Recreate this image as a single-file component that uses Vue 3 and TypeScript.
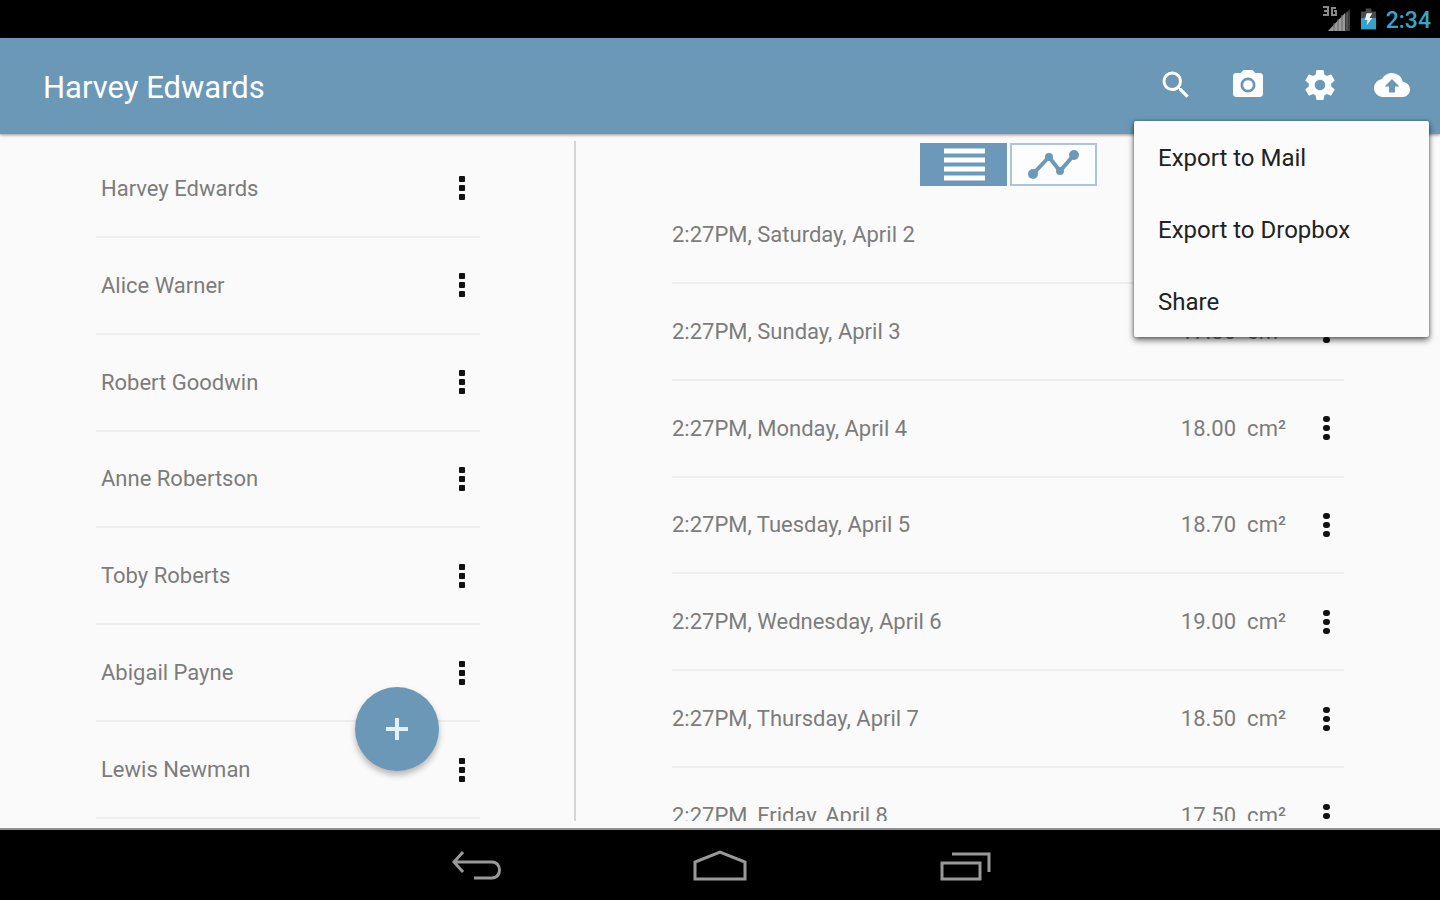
<script setup lang="ts">
import { ref } from 'vue'

interface Measurement {
  date: string
  area: string
}

const patients: string[] = [
  'Harvey Edwards',
  'Alice Warner',
  'Robert Goodwin',
  'Anne Robertson',
  'Toby Roberts',
  'Abigail Payne',
  'Lewis Newman',
]

const measurements: Measurement[] = [
  { date: '2:27PM, Saturday, April 2', area: '17.00' },
  { date: '2:27PM, Sunday, April 3', area: '17.80' },
  { date: '2:27PM, Monday, April 4', area: '18.00' },
  { date: '2:27PM, Tuesday, April 5', area: '18.70' },
  { date: '2:27PM, Wednesday, April 6', area: '19.00' },
  { date: '2:27PM, Thursday, April 7', area: '18.50' },
  { date: '2:27PM, Friday, April 8', area: '17.50' },
]

const exportOptions: string[] = ['Export to Mail', 'Export to Dropbox', 'Share']

const selected = ref(patients[0])
const menuOpen = ref(true)
</script>

<template>
  <div class="screen">
    <div class="status-bar">
      <svg class="signal" viewBox="0 0 30 28" aria-hidden="true">
        <path d="M1 2h5v8H1M2 6h4M14 3h-4v7h4V6h-2" fill="none" stroke="#8a8a8a" stroke-width="2" />
        <path d="M28 4v22h-5V9z" fill="#3c3c3c" />
        <path d="M23 8v18H6z" fill="#9a9a9a" />
        <path d="M12 18v8M16 14v12M20 10v16M25 7v19" stroke="#666" stroke-width="1" />
      </svg>
      <svg class="battery" viewBox="0 0 18 24" aria-hidden="true">
        <path d="M6 1h6v3h5v8H1V4h5z" fill="#4b4b4b" />
        <path d="M1 11h16v12H1z" fill="#35a3c8" />
        <path d="M7 6h6l-3 5h3l-6 8 1-6H5z" fill="#f4f4f4" />
      </svg>
      <span class="clock">2:34</span>
    </div>

    <header class="app-bar">
      <h1>{{ selected }}</h1>
      <div class="actions">
        <button type="button" aria-label="Search">
          <svg viewBox="0 0 24 24"><path d="M15.500 14h-.79l-.28-.27A6.470 6.470 0 0 0 16 9.500 6.500 6.500 0 1 0 9.500 16c1.610 0 3.090-.59 4.230-1.570l.27.28v.79l5 4.990L20.490 19l-4.990-5zm-6 0C7.010 14 5 11.990 5 9.500S7.010 5 9.500 5 14 7.010 14 9.500 11.990 14 9.500 14z" /></svg>
        </button>
        <button type="button" aria-label="Camera">
          <svg viewBox="0 0 24 24"><circle cx="12" cy="12" r="3.200" /><path d="M9 2 7.170 4H4c-1.100 0-2 .9-2 2v12c0 1.100.9 2 2 2h16c1.100 0 2-.9 2-2V6c0-1.100-.9-2-2-2h-3.170L15 2H9zm3 15c-2.760 0-5-2.240-5-5s2.240-5 5-5 5 2.240 5 5-2.240 5-5 5z" /></svg>
        </button>
        <button type="button" aria-label="Settings">
          <svg viewBox="0 0 24 24"><path d="M19.430 12.980c.04-.32.07-.64.07-.98s-.03-.66-.07-.98l2.110-1.650c.19-.15.24-.42.12-.64l-2-3.460c-.12-.22-.39-.3-.61-.22l-2.490 1c-.52-.4-1.080-.73-1.690-.98l-.38-2.650C14.460 2.180 14.250 2 14 2h-4c-.25 0-.46.18-.49.42l-.38 2.650c-.61.25-1.170.59-1.690.98l-2.490-1c-.23-.09-.49 0-.61.22l-2 3.460c-.13.22-.07.49.12.64l2.110 1.650c-.04.32-.07.65-.07.98s.03.66.07.98l-2.110 1.650c-.19.15-.24.42-.12.64l2 3.460c.12.22.39.3.61.22l2.490-1c.52.4 1.080.73 1.690.98l.38 2.650c.03.24.24.42.49.42h4c.25 0 .46-.18.49-.42l.38-2.650c.61-.25 1.170-.59 1.690-.98l2.490 1c.23.09.49 0 .61-.22l2-3.460c.12-.22.07-.49-.12-.64l-2.110-1.650zM12 15.500c-1.930 0-3.500-1.570-3.500-3.500s1.570-3.500 3.500-3.500 3.500 1.570 3.500 3.500-1.570 3.500-3.500 3.500z" /></svg>
        </button>
        <button type="button" aria-label="Export" :aria-expanded="menuOpen" @click="menuOpen = !menuOpen">
          <svg viewBox="0 0 24 24"><path d="M19.350 10.040A7.490 7.490 0 0 0 12 4C9.110 4 6.600 5.640 5.350 8.040A5.994 5.994 0 0 0 0 14c0 3.310 2.690 6 6 6h13c2.760 0 5-2.240 5-5 0-2.640-2.050-4.780-4.650-4.960zM14 13v4h-4v-4H7l5-5 5 5h-3z" /></svg>
        </button>
      </div>
      <div v-if="menuOpen" class="menu" role="menu">
        <button v-for="option in exportOptions" :key="option" type="button" role="menuitem">{{ option }}</button>
      </div>
    </header>

    <main class="content">
      <section class="pane patients">
        <ul class="rows">
          <li v-for="name in patients" :key="name">
            <button type="button" class="label" @click="selected = name">{{ name }}</button>
            <button type="button" class="more" :aria-label="`Options for ${name}`">
              <i></i><i></i><i></i>
            </button>
          </li>
        </ul>
        <button type="button" class="fab" aria-label="Add">
          <svg viewBox="0 0 22 22"><path d="M11 0v22M0 11h22" /></svg>
        </button>
      </section>

      <section class="pane records">
        <div class="toggle">
          <button type="button" class="active" aria-label="List">
            <svg viewBox="0 0 83 39"><path d="M22 6h41M22 15h41M22 24h41M22 33h41" stroke="#fff" stroke-width="5" /></svg>
          </button>
          <button type="button" aria-label="Chart">
            <svg viewBox="0 0 83 39">
              <path d="M21 29 37 12 48 26 62 10" fill="none" stroke="#6c99b9" stroke-width="4" />
              <g fill="#6c99b9">
                <circle cx="21" cy="29" r="5" />
                <circle cx="37" cy="12" r="4" />
                <circle cx="48" cy="26" r="4" />
                <circle cx="62" cy="10" r="5" />
              </g>
            </svg>
          </button>
        </div>
        <ul class="rows">
          <li v-for="m in measurements" :key="m.date">
            <span class="label">{{ m.date }}</span>
            <span class="area"><span>{{ m.area }}</span><span>cm²</span></span>
            <button type="button" class="more round" :aria-label="`Options for ${m.date}`">
              <i></i><i></i><i></i>
            </button>
          </li>
        </ul>
      </section>
    </main>

    <nav class="nav-bar">
      <button type="button" aria-label="Back">
        <svg viewBox="0 0 54 36"><path d="M14 5 5 15l9 10M5 15h38c10 0 10 16 0 16H25" /></svg>
      </button>
      <button type="button" aria-label="Home">
        <svg viewBox="0 0 54 36"><path d="M2 32V15L27 5l25 10v17z" /></svg>
      </button>
      <button type="button" aria-label="Recent apps">
        <svg viewBox="0 0 54 36"><path d="M5 16h38v16H5zM15 7h37v18" /></svg>
      </button>
    </nav>
  </div>
</template>

<style>
body {
  margin: 0;
}
</style>

<style scoped>
.screen {
  display: flex;
  flex-direction: column;
  height: 100vh;
  overflow: hidden;
  background: #fafafa;
  font-family: Roboto, "Noto Sans", sans-serif;
  color: #7c7c7c;
}

button {
  margin: 0;
  padding: 0;
  border: 0;
  background: none;
  font: inherit;
  color: inherit;
  cursor: pointer;
}

.status-bar {
  flex: none;
  display: flex;
  align-items: center;
  justify-content: flex-end;
  height: 38px;
  padding-right: 9px;
  background: #000;
}

.signal {
  width: 30px;
  height: 28px;
  margin-right: 8px;
}

.battery {
  width: 17px;
  height: 24px;
  margin-right: 9px;
}

.clock {
  padding-top: 2px;
  font-size: 23px;
  font-weight: 500;
  color: #33a5cf;
}

.app-bar {
  position: relative;
  z-index: 2;
  flex: none;
  display: flex;
  align-items: center;
  justify-content: space-between;
  height: 96px;
  padding: 0 12px 0 43px;
  background: #6c98b8;
  box-shadow: 0 1px 3px rgba(60, 40, 40, 0.5);
}

h1 {
  margin: 0;
  padding-top: 2px;
  font-size: 31px;
  font-weight: 400;
  color: #fff;
}

.actions {
  display: flex;
  padding-bottom: 3px;
}

.actions button {
  display: flex;
  align-items: center;
  justify-content: center;
  width: 72px;
  height: 72px;
}

.actions svg {
  width: 36px;
  height: 36px;
  fill: #fff;
}

.menu {
  position: absolute;
  top: 83px;
  right: 11px;
  display: flex;
  flex-direction: column;
  width: 295px;
  background: #fbfbfb;
  border-radius: 2px;
  box-shadow: 0 3px 6px rgba(0, 0, 0, 0.6), 0 0 3px rgba(0, 0, 0, 0.35);
}

.menu button {
  height: 72px;
  padding: 2px 24px 0;
  font-size: 24px;
  text-align: left;
  color: #222;
}

.content {
  flex: 1;
  min-height: 0;
  display: grid;
  grid-template-columns: 2fr 3fr;
  padding: 7px 0;
  border-bottom: 2px solid #909090;
  box-sizing: border-box;
}

.pane {
  position: relative;
  min-height: 0;
  box-sizing: border-box;
}

.patients {
  padding: 0 94px 0 96px;
  border-right: 2px solid #d6d6d6;
}

.records {
  padding: 2px 96px 0;
  overflow: hidden;
}

.rows {
  display: grid;
  grid-auto-rows: 1fr;
  min-height: 678px;
  margin: 0;
  padding: 0;
  list-style: none;
}

.rows li {
  display: flex;
  align-items: center;
  border-bottom: 2px solid #ededed;
  font-size: 22px;
}

.label {
  flex: 1;
  text-align: left;
}

.patients .label {
  padding-left: 5px;
}

.area {
  display: flex;
  gap: 11px;
  margin-right: 22px;
}

.more {
  display: flex;
  flex-direction: column;
  align-items: center;
  justify-content: center;
  gap: 3px;
  width: 36px;
  height: 48px;
}

.more i {
  width: 6px;
  height: 6px;
  border-radius: 1px;
  background: #111;
}

.more.round i {
  width: 7px;
  border-radius: 3px;
}

.fab {
  position: absolute;
  right: 135px;
  bottom: 50px;
  display: flex;
  align-items: center;
  justify-content: center;
  width: 84px;
  height: 84px;
  border-radius: 50%;
  background: #6c98b8;
  box-shadow: 0 4px 6px rgba(0, 0, 0, 0.28);
}

.fab svg {
  width: 22px;
  height: 22px;
  stroke: #e3f1f9;
  stroke-width: 4;
}

.toggle {
  display: flex;
  justify-content: center;
  gap: 3px;
  margin-bottom: 1px;
}

.toggle button {
  display: flex;
  width: 87px;
  height: 43px;
  box-sizing: border-box;
  border: 2px solid #abc5d8;
  background: #fdfdfd;
}

.toggle .active {
  border-color: #6c99b9;
  background: #6c99b9;
}

.toggle svg {
  width: 100%;
  height: 100%;
}

.nav-bar {
  flex: none;
  display: flex;
  justify-content: center;
  height: 70px;
  background: #000;
}

.nav-bar button {
  display: flex;
  align-items: center;
  justify-content: center;
  width: 244px;
}

.nav-bar svg {
  width: 54px;
  height: 36px;
  fill: none;
  stroke: #999;
  stroke-width: 3;
}
</style>
